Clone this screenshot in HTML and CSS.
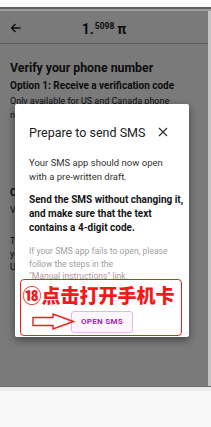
FILE: index.html
```html
<!DOCTYPE html>
<html>
<head>
<meta charset="utf-8">
<link rel="stylesheet" href="styles.css">
</head>
<body>
<div class="top"></div>
<div class="main">
  <div class="screen">
    <div class="app">
      <header class="bar">
        <svg class="back" width="11" height="10" viewBox="0 0 11 10"><path d="M10.5 5H1.5M5.5 1L1.5 5L5.5 9" fill="none" stroke="#222" stroke-width="1.4"/></svg>
        <div class="balance"><span class="int">1.</span><span class="dec">5098</span><span class="pi">π</span></div>
      </header>
      <div class="content">
        <h1 class="h1">Verify your phone number</h1>
        <h2 class="h2">Option 1: Receive a verification code</h2>
        <p class="p">Only available for US and Canada phone<br>numbers.</p>
        <h2 class="h2 opt2">Option 2: Send an SMS</h2>
        <p class="p vline">Verify from your phone.</p>
        <p class="p desc">To verify, send an SMS from the phone in<br>your Pi account.<br>Use the button below.</p>
      </div>
    </div>
    <div class="scrim"></div>
    <div class="dialog">
      <div class="dlg-head">
        <span class="dlg-title">Prepare to send SMS</span>
        <svg class="close" width="10" height="10" viewBox="0 0 10 10"><path d="M1 1L9 9M9 1L1 9" stroke="#333" stroke-width="1.3"/></svg>
      </div>
      <p class="dlg-p1">Your SMS app should now open<br>with a pre-written draft.</p>
      <p class="dlg-p2">Send the SMS without changing it,<br>and make sure that the text<br>contains a 4-digit code.</p>
      <p class="dlg-p3">If your SMS app fails to open, please<br>follow the steps in the<br>"Manual instructions" link.</p>
      <button class="open-btn">OPEN SMS</button>
      <div class="note">
        <div class="note-text">⑱点击打开手机卡</div>
        <svg class="arrow" width="43" height="17" viewBox="0 0 43 17"><path d="M1 4.5H21V1L41.5 8.5L21 16V12.5H1Z" fill="#fff" stroke="#f21d1d" stroke-width="1.4" stroke-linejoin="miter"/></svg>
      </div>
    </div>
  </div>
  <div class="edge"></div>
</div>
<div class="bottom"></div>
</body>
</html>
```
FILE: styles.css
```css
html, body {
  margin: 0;
  padding: 0;
}
body {
  width: 211px;
  height: 427px;
  overflow: hidden;
  background: #f8f8f8;
  font-family: Roboto, "Liberation Sans", sans-serif;
}
.top {
  height: 7px;
  background: #fbfbfb;
  border-bottom: 2px solid #606060;
}
.main {
  display: flex;
  height: 377px;
  border-top: 2px solid #9c9c9c;
  box-sizing: border-box;
}
.screen {
  position: relative;
  width: 208px;
  height: 375px;
  overflow: hidden;
}
.edge {
  width: 3px;
  background: #c4c4c4;
}
.app {
  background: #fff;
  height: 100%;
}
.bar {
  height: 32px;
  border-bottom: 1.5px solid #bdbdbd;
  display: flex;
  align-items: center;
  position: relative;
}
.back {
  margin-left: 10px;
  margin-top: 1px;
}
.balance {
  position: absolute;
  left: 0;
  right: 0;
  top: 8px;
  text-align: center;
  color: #1c1c1c;
  font-weight: 700;
}
.int {
  font-size: 14px;
}
.dec {
  font-size: 8.5px;
  vertical-align: 5px;
  margin-left: 1px;
}
.pi {
  font-size: 14px;
  margin-left: 3px;
}
.content {
  padding: 17px 10px 0 10px;
  color: #202020;
}
.h1 {
  margin: 0;
  font-size: 12.3px;
  line-height: 15px;
  font-weight: 700;
}
.h2 {
  margin: 4px 0 0;
  font-size: 10px;
  line-height: 12px;
  font-weight: 700;
}
.p {
  margin: 2px 0 0;
  font-size: 9px;
  line-height: 14px;
  white-space: nowrap;
}
.opt2 {
  margin-top: 65px;
}
.vline {
  margin-top: 4px;
}
.desc {
  margin-top: 18px;
  line-height: 13px;
}
.scrim {
  position: absolute;
  inset: 0;
  background: rgba(0, 0, 0, 0.52);
}
.dialog {
  position: absolute;
  left: 15px;
  top: 93px;
  width: 174px;
  height: 233px;
  box-sizing: border-box;
  padding: 21px 14px 0;
  background: #fff;
  border-radius: 2px;
  box-shadow: 0 3px 8px rgba(0, 0, 0, 0.45);
}
.dlg-head {
  display: flex;
  justify-content: space-between;
  align-items: center;
  height: 16px;
  padding-right: 7px;
}
.dlg-title {
  font-size: 12.5px;
  line-height: 16px;
  color: #202020;
}
.close {
  margin-top: -2px;
}
.dlg-p1 {
  margin: 15px 0 0;
  font-size: 9.5px;
  line-height: 13.5px;
  color: #333;
  white-space: nowrap;
}
.dlg-p2 {
  margin: 10px 0 0;
  font-size: 10px;
  line-height: 14px;
  font-weight: 700;
  color: #151515;
  white-space: nowrap;
}
.dlg-p3 {
  margin: 10px 0 0;
  font-size: 8.6px;
  line-height: 12.5px;
  color: #a0a0a0;
  white-space: nowrap;
}
.open-btn {
  display: block;
  margin: 28px auto 0;
  width: 62px;
  height: 22px;
  padding: 0;
  border: 1px solid #e4b6e6;
  border-radius: 3px;
  background: #fdf6fd;
  color: #9c27b0;
  font-family: Roboto, "Liberation Sans", sans-serif;
  font-size: 8px;
  font-weight: 700;
  letter-spacing: 0.3px;
}
.note {
  position: absolute;
  left: 5px;
  top: 175px;
  width: 162px;
  height: 57px;
  box-sizing: border-box;
  border: 1.5px solid #f21d1d;
  border-radius: 4px;
  padding: 5px 0 0 1.5px;
  pointer-events: none;
}
.note-text {
  font-family: "Noto Sans CJK SC", sans-serif;
  font-size: 19px;
  line-height: 20px;
  font-weight: 900;
  color: #f01a1a;
  white-space: nowrap;
}
.arrow {
  display: block;
  margin: 8px 0 0 9.5px;
}
.bottom {
  height: 41px;
  border-top: 1px solid #6a6a6a;
  box-sizing: border-box;
  background: linear-gradient(#ececec 0 4px, #f8f8f8 4px);
}
```
